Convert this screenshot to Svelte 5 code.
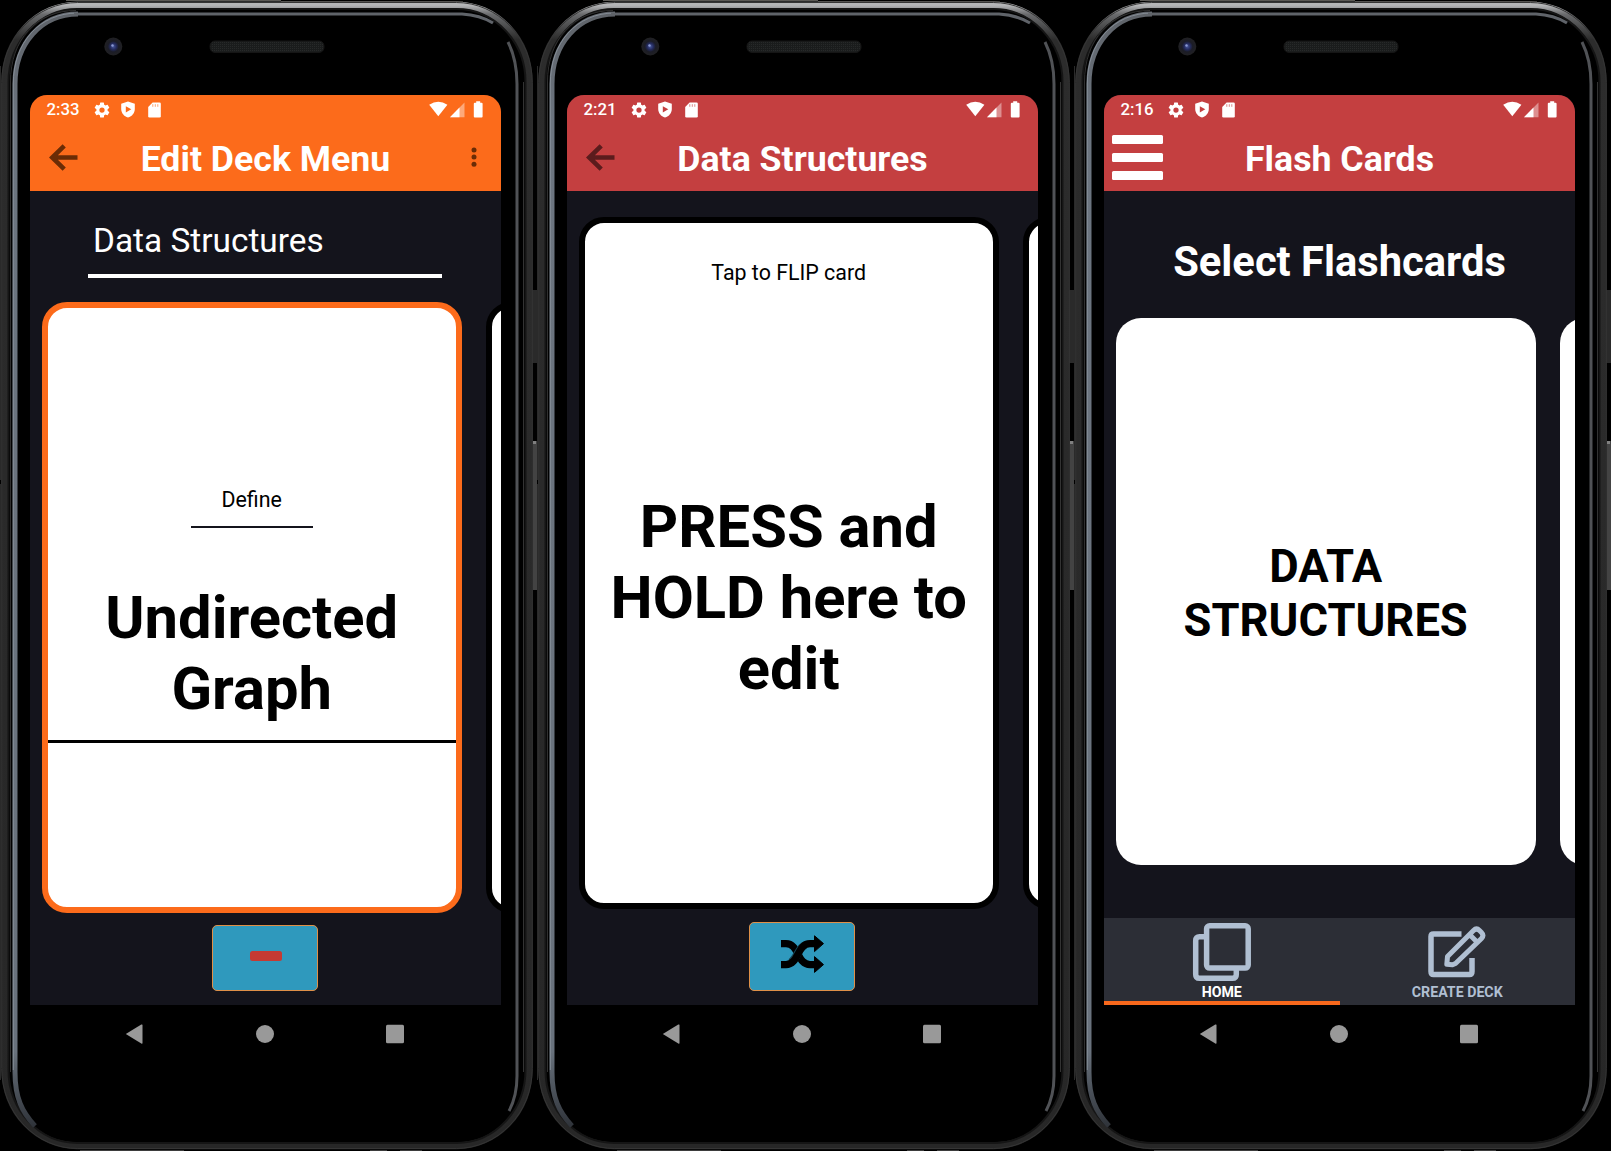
<script>
  const phones = [
    { kind: 'edit', time: '2:33', title: 'Edit Deck Menu' },
    { kind: 'study', time: '2:21', title: 'Data Structures' },
    { kind: 'home', time: '2:16', title: 'Flash Cards' }
  ];
</script>

{#snippet frame(i)}
  <svg class="frame" viewBox="0 0 537 1151" aria-hidden="true">
    <defs>
      <linearGradient id="rim{i}" x1="0" y1="0" x2="0" y2="1">
        <stop offset="0" stop-color="#b5b6b8" />
        <stop offset="0.008" stop-color="#6a6b6d" />
        <stop offset="0.03" stop-color="#2c2c2c" />
        <stop offset="1" stop-color="#272727" />
      </linearGradient>
      <linearGradient id="fade{i}" gradientUnits="userSpaceOnUse" x1="0" y1="10" x2="0" y2="1130">
        <stop offset="0" stop-color="#5f6369" />
        <stop offset="0.1" stop-color="#6c7580" />
        <stop offset="0.93" stop-color="#69727d" />
        <stop offset="1" stop-color="#2c3036" />
      </linearGradient>
      <radialGradient id="lens{i}">
        <stop offset="0" stop-color="#46569c" />
        <stop offset="0.35" stop-color="#232a5c" />
        <stop offset="0.6" stop-color="#1b1c26" />
        <stop offset="1" stop-color="#212123" />
      </radialGradient>
      <pattern id="mesh{i}" width="2" height="2" patternUnits="userSpaceOnUse">
        <rect width="2" height="2" fill="#1a1c1c" />
        <rect width="1" height="1" fill="#272929" />
      </pattern>
    </defs>
    <path d="M66 .5H281" stroke="#5b5955" />
    <path d="M281 1.5H463" stroke="#33322f" />
    <rect x="532" y="290" width="5" height="73" fill="#2a2a2a" />
    <rect x="533" y="441" width="4" height="149" fill="#434343" />
    <rect x="533" y="441" width="3" height="3" fill="#808080" />
    <path d="M.5 66V480M.5 484V1080" stroke="#2a2a2a" />
    <rect x="5" y="5.200" width="524" height="1140.500" rx="72" ry="76" fill="#000" stroke="url(#rim{i})" stroke-width="7" />
    <rect x="1.700" y="2.500" width="530.600" height="1146" rx="76" ry="80" fill="none" stroke="#353535" stroke-width="1" />
    <rect x="8.500" y="9" width="517" height="1134" rx="69" ry="73" fill="none" stroke="#151515" stroke-width="2" />
    <path d="M10.500 1072V82C10.500 40 36 10.500 76 10.500" fill="none" stroke="#303030" />
    <path d="M523.500 82V1072" stroke="#333" />
    <path d="M35 1126C22 1112 15 1098 15 1072V84C15 44 41 14 78 14" fill="none" stroke="url(#fade{i})" stroke-width="5" />
    <path d="M13.300 1070V84C13.300 43 39 13 78 13" fill="none" stroke="#8d959f" stroke-width=".8" />
    <path d="M74 14H462Q480 15 493 23" fill="none" stroke="#5f6369" stroke-width="3.200" />
    <path d="M508 42Q517 60 517 84V1076Q517 1096 509 1111" fill="none" stroke="#505256" stroke-width="3" />
    <path d="M80 1150.500H184M370 1150.500H387M400 1150.500H422" stroke="#3d3d3d" />
    <circle cx="113.300" cy="46.500" r="9" fill="url(#lens{i})" />
    <circle cx="112.500" cy="45.500" r="1.200" fill="#8c9ad4" />
    <rect x="210" y="41" width="114" height="11.500" rx="5" fill="url(#mesh{i})" stroke="#151515" />
  </svg>
{/snippet}

{#snippet status(time)}
  <div class="status">
    <span class="time">{time}</span>
    <svg class="gear" viewBox="0 0 24 24" fill="#fff"><path d="M19.430 12.980c.040-.320.070-.640.070-.980s-.030-.660-.070-.980l2.110-1.650a.5.5 0 0 0 .120-.640l-2-3.460a.5.5 0 0 0-.610-.220l-2.490 1a7.300 7.300 0 0 0-1.690-.980l-.380-2.650A.490.490 0 0 0 14 2h-4a.490.490 0 0 0-.490.420l-.380 2.650c-.610.250-1.170.590-1.690.980l-2.490-1a.490.490 0 0 0-.610.220l-2 3.460a.490.490 0 0 0 .120.640l2.110 1.650a7.900 7.900 0 0 0 0 1.960l-2.110 1.650a.5.5 0 0 0-.120.640l2 3.460c.120.220.390.300.610.220l2.490-1c.520.400 1.080.730 1.690.980l.380 2.650c.030.240.240.420.490.420h4c.250 0 .460-.180.490-.420l.380-2.650a7.700 7.700 0 0 0 1.690-.980l2.490 1c.230.090.490 0 .610-.220l2-3.460a.5.5 0 0 0-.120-.640zM12 15.500a3.500 3.500 0 1 1 0-7 3.500 3.500 0 0 1 0 7z" /></svg>
    <svg class="shield" viewBox="0 0 14 17"><path d="M7 .4 13.800 2.800V8C13.800 12 11 15.400 7 16.600 3 15.400.2 12 .2 8V2.800z" fill="#fff" /><path d="M4.800 5.200 10.300 8.300 4.800 11.400z" class="hole" /></svg>
    <svg class="sd" viewBox="0 0 13 16"><path d="M4.600.5H11.500Q12.800.5 12.800 1.800V14.200Q12.800 15.500 11.500 15.500H1.500Q.2 15.500.2 14.200V5z" fill="#fff" /><path d="M4.800 2.200V4.800M7.300 2.200V4.800M9.800 2.200V4.800" class="slots" /></svg>
    <svg class="radio" viewBox="0 0 55 17">
      <path d="M.2 3.800Q9.300-2.400 18.400 3.800L9.300 15.200z" fill="#fff" />
      <path d="M35.500 1.500V16.200H21z" fill="#fff" opacity=".42" />
      <path d="M30.500 6.500V16.200H21z" fill="#fff" />
      <path d="M47.200 1.800V.3H51.200V1.800H52.600Q53.600 1.800 53.600 2.800V15.400Q53.600 16.400 52.600 16.400H45.800Q44.800 16.400 44.800 15.400V2.800Q44.800 1.800 45.800 1.800z" fill="#fff" />
    </svg>
  </div>
{/snippet}

<main>
  {#each phones as p, i}
    <section class="phone {p.kind}">
      {@render frame(i)}
      <div class="screen">
        <header>
          {@render status(p.time)}
          <div class="bar">
            <div class="side">
              {#if p.kind === 'home'}
                <div class="burger"><i></i><i></i><i></i></div>
              {:else}
                <svg class="back" viewBox="0 0 29 27"><path d="M15.200 1.900 3.200 13.500 15.200 25.100M3.200 13.500H28.500" /></svg>
              {/if}
            </div>
            <h1>{p.title}</h1>
            <div class="side end">
              {#if p.kind === 'edit'}
                <svg class="dots" viewBox="0 0 6 20"><circle cx="3" cy="3" r="2.500" /><circle cx="3" cy="10.100" r="2.500" /><circle cx="3" cy="17.200" r="2.500" /></svg>
              {/if}
            </div>
          </div>
        </header>

        {#if p.kind === 'edit'}
          <div class="deck-name"><span>Data Structures</span></div>
          <div class="cards">
            <article class="card">
              <div class="prompt">Define</div>
              <div class="answer">Undirected<br />Graph</div>
            </article>
            <article class="card next"></article>
          </div>
          <button class="action" aria-label="Remove card"><span class="minus"></span></button>
        {:else if p.kind === 'study'}
          <div class="cards">
            <article class="card">
              <div class="hint">Tap to FLIP card</div>
              <div class="answer">PRESS and<br />HOLD here to<br />edit</div>
            </article>
            <article class="card next"></article>
          </div>
          <button class="action" aria-label="Shuffle">
            <svg class="shuffle" viewBox="0 0 43 38">
              <path d="M0 8.600H5C18 8.600 16 29.600 29 29.600H34" />
              <path class="over-gap" d="M10 27.500C17 22 17.500 12 24.500 10" />
              <path d="M0 29.600H5C18 29.600 16 8.600 29 8.600H34" />
              <path class="head" d="M33.500.8 42.500 8.600 33.500 16.600zM33.500 21.600 42.500 29.600 33.500 37.400z" />
            </svg>
          </button>
        {:else}
          <h2>Select Flashcards</h2>
          <div class="cards">
            <article class="card"><div class="deck">DATA<br />STRUCTURES</div></article>
            <article class="card next"></article>
          </div>
          <nav class="tabs">
            <div class="tab active">
              <svg viewBox="0 0 60 60"><path d="M12 13.800H7.500Q3.700 13.800 3.700 17.600V51.500Q3.700 55.300 7.500 55.300H40.500Q44.300 55.300 44.300 51.500V47" /><rect x="14.600" y="2.800" width="41.600" height="42.300" rx="3" /></svg>
              <span>HOME</span>
            </div>
            <div class="tab">
              <svg viewBox="0 0 60 60"><path d="M34.500 11H6.500Q4 11 4 13.500V48.500Q4 51.500 6.500 51.500H42.500Q45 51.500 45 48.500V35" /><path d="M19.800 41.300 20.500 33.500 46.500 7.500Q49.500 4.500 52.500 7.500L54.500 9.500Q57.500 12.500 54.500 15.500L28.500 40.500 25.500 41.800zM42.500 11.500 50.500 19.500" class="pen" /></svg>
              <span>CREATE DECK</span>
            </div>
          </nav>
        {/if}
      </div>
      <footer>
        <svg viewBox="0 0 20 20"><path d="M.8 10 16.300.6Q17.500 0 17.500 1V19Q17.500 20 16.300 19.400z" /></svg>
        <svg viewBox="0 0 20 20"><circle cx="10" cy="10" r="9" /></svg>
        <svg viewBox="0 0 20 20"><rect x="1" y=".8" width="18" height="18.400" rx="1.500" /></svg>
      </footer>
    </section>
  {/each}
</main>

<style>
  :global(body) { background: #000; overflow: hidden; }
  main { display: flex; width: 1611px; height: 1151px; background: #000; overflow: hidden; font-family: Roboto, sans-serif; }
  .phone { --bar: #c43f40; --ink: #5b1c1d; position: relative; flex: none; width: 537px; height: 1151px; box-sizing: border-box; padding: 95px 36px 0 30px; }
  .edit { --bar: #fc6b1b; --ink: #6a2c06; }
  .frame { position: absolute; inset: 0; width: 537px; height: 1151px; }
  .screen { position: relative; display: flex; flex-direction: column; height: 910px; background: #14141c; border-radius: 17px 17px 0 0; overflow: hidden; }
  header { flex: none; height: 95.500px; background: var(--bar); }
  .status { display: flex; align-items: center; height: 29px; padding: 0 17px 0 16.500px; }
  .status svg { flex: none; }
  .time { width: 47px; color: #fff; font-size: 16.800px; font-weight: 500; line-height: 29px; }
  .gear { width: 18px; height: 18px; margin: 0 10px 0 -1px; }
  .shield { width: 14px; height: 17px; margin-right: 13px; }
  .sd { width: 13px; height: 16px; }
  .radio { width: 55px; height: 17px; margin-left: auto; }
  .hole { fill: var(--bar); }
  .slots { stroke: var(--bar); stroke-width: 1; opacity: .6; }
  .bar { display: flex; align-items: center; height: 66px; }
  .side { flex: none; width: 80px; height: 60px; display: flex; align-items: center; }
  .end { justify-content: flex-end; }
  h1 { flex: 1; margin: 4px 0 0; color: #fff; text-align: center; font-size: 35.700px; line-height: 42px; font-weight: 700; white-space: nowrap; }
  .back { width: 29px; height: 27px; margin-left: 18.500px; }
  .back path { fill: none; stroke: var(--ink); stroke-width: 4.600; }
  .dots { width: 6px; height: 20px; margin-right: 24px; fill: var(--ink); }
  .burger { display: flex; flex-direction: column; gap: 9.500px; margin: 1px 0 0 8px; }
  .burger i { width: 51px; height: 8.700px; border-radius: 1.500px; background: #fff; }

  .deck-name { flex: none; width: 354px; height: 87px; margin-left: 58px; box-sizing: border-box; border-bottom: 4px solid #fff; color: #fff; }
  .deck-name span { display: block; padding: 30px 0 0 5px; font-size: 33.400px; line-height: 40px; }
  .cards { flex: none; display: flex; gap: 24.500px; margin-left: 11.700px; }
  .card { flex: none; width: 420px; box-sizing: border-box; border: 6px solid #000; border-radius: 25px; background: #fff; color: #000; text-align: center; display: flex; flex-direction: column; align-items: center; }
  .edit .cards { margin-top: 24.500px; }
  .edit .card { height: 611px; }
  .edit .card:first-child { border-color: #fc6b1b; }
  .prompt { width: 122px; margin-top: 176px; height: 42px; border-bottom: 2.500px solid #14141c; font-size: 21.400px; line-height: 32px; }
  .answer { font-size: 59.700px; line-height: 71px; font-weight: 700; }
  .edit .answer { width: 100%; margin-top: 54.500px; padding-bottom: 15px; border-bottom: 3px solid #000; }
  .action { display: flex; align-items: center; justify-content: center; box-sizing: border-box; flex: none; width: 106px; height: 66px; margin: 12px 0 0 182px; padding: 0; border: 1px solid #df9048; border-radius: 5px; background: #2f99bd; }
  .minus { width: 32px; height: 10px; margin: 0 0 4px 2px; border-radius: 2.500px; background: #c53a33; }

  .study .cards { margin-top: 26.500px; }
  .study .card { height: 692px; }
  .hint { margin-top: 38px; font-size: 21.400px; line-height: 24px; }
  .study .answer { margin-top: 207px; }
  .study .action { height: 69px; margin-top: 12.500px; }
  .shuffle { width: 43px; height: 38px; margin: 0 0 4px 1px; }
  .shuffle path { fill: none; stroke: #000; stroke-width: 7.200; }
  .shuffle .over-gap { stroke: #154858; stroke-width: 8; }
  .shuffle .head { fill: #000; stroke: #000; stroke-width: 1; stroke-linejoin: round; }

  h2 { flex: none; margin: 45px 0 0; color: #fff; text-align: center; font-size: 41.700px; line-height: 52px; font-weight: 700; }
  .home .cards { margin-top: 30.500px; }
  .home .card { height: 546.500px; border: 0; justify-content: center; }
  .deck { margin-top: 5px; font-size: 45.300px; line-height: 53.500px; font-weight: 700; }
  .tabs { display: flex; height: 87px; margin-top: auto; background: #2c2e36; }
  .tab { flex: 1; box-sizing: border-box; display: flex; flex-direction: column; align-items: center; padding-top: 5px; border-bottom: 4px solid transparent; color: #b0bfd2; }
  .tab.active { border-color: #f8681c; }
  .tab svg { width: 60px; height: 60px; flex: none; fill: none; stroke: #b0bfd2; stroke-width: 5.500; }
  .tab .pen { stroke-width: 5; stroke-linejoin: round; }
  .tab span { font-size: 14.200px; line-height: 18px; font-weight: 700; }
  .active span { color: #fff; }
  footer { position: relative; display: flex; justify-content: space-between; margin: 19px 96px 0 95px; }
  footer svg { width: 20px; height: 20px; fill: #999; }
</style>
